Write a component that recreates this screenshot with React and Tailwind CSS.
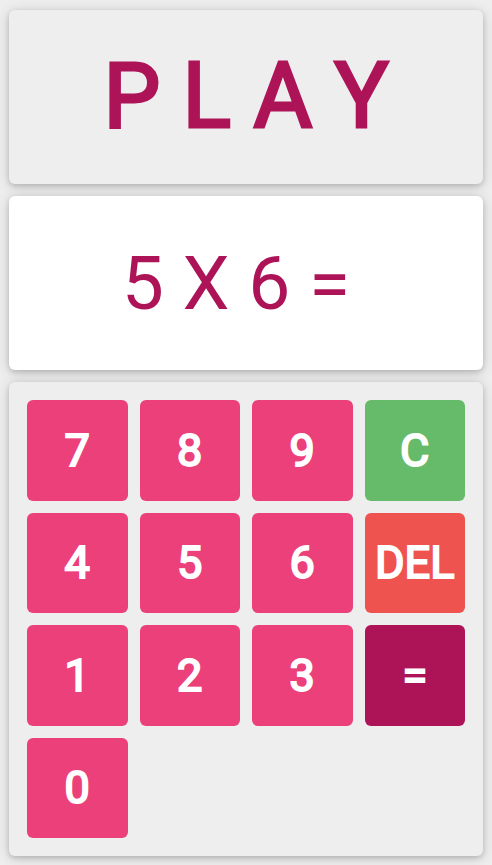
const keys = [
  ['7'], ['8'], ['9'], ['C', 'bg-[#66bb6a]'],
  ['4'], ['5'], ['6'], ['DEL', 'bg-[#ef5350]'],
  ['1'], ['2'], ['3'], ['=', 'bg-[#ad1457]'],
  ['0'],
];

const panel = 'rounded-md shadow-[0_2px_5px_rgba(0,0,0,0.16),0_2px_14px_rgba(0,0,0,0.16)]';

export default function App() {
  return (
    <main className="min-h-screen bg-[#eeeeee] px-[9px] pt-[10px] pb-[9px] flex flex-col gap-3 font-['Roboto',sans-serif] text-[#ad1457]">
      <button className={`${panel} h-[174px] bg-[#eeeeee] text-[90px] leading-none [-webkit-text-stroke:3px_#ad1457] whitespace-pre`}>
        P L A Y
      </button>
      <section className={`${panel} h-[174px] bg-white flex items-center justify-center gap-5`}>
        <label htmlFor="answer" className="text-[75px] leading-none">5 X 6 =</label>
        <output id="answer" />
      </section>
      <section className={`${panel} bg-[#eeeeee] p-[18px] grid grid-cols-4 gap-3`}>
        {keys.map(([label, color = 'bg-[#ec407a]']) => (
          <button key={label} className={`${color} aspect-square rounded-md text-white text-[45px] leading-none [-webkit-text-stroke:2px_white]`}>
            {label}
          </button>
        ))}
      </section>
    </main>
  );
}
